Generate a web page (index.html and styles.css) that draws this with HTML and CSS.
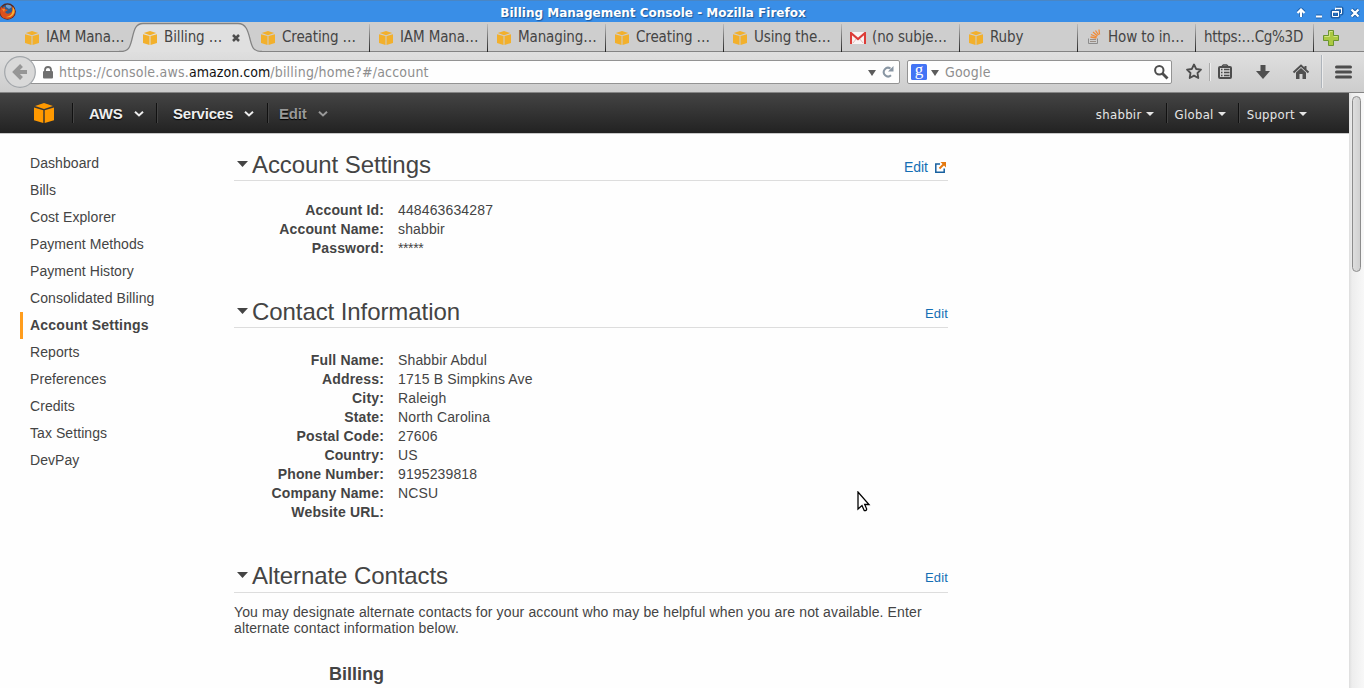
FILE: index.html
```html
<!DOCTYPE html>
<html lang="en">
<head>
<meta charset="utf-8">
<title>Billing Management Console</title>
<link rel="stylesheet" href="styles.css">
</head>
<body>
<svg class="defs" width="0" height="0">
  <symbol id="cube" viewBox="0 0 20 20">
    <path d="M10 0 19 3 10 6 1 3Z M0 4.5 9.3 7.3V20L0 17.2Z M20 4.5 10.7 7.3V20L20 17.2Z"/>
  </symbol>
  <symbol id="chev" viewBox="0 0 10 6"><path d="M1 .8 5 4.500 9 .8" fill="none" stroke="currentColor" stroke-width="2"/></symbol>
  <symbol id="tri" viewBox="0 0 12 6" preserveAspectRatio="none"><path d="M0 0H12L6 6Z" fill="currentColor"/></symbol>
</svg>
<header class="titlebar">
  <svg class="firefox" width="17" height="18" viewBox="0 0 17 18">
    <circle cx="7.5" cy="9.5" r="8.3" fill="#5b2a20"/>
    <circle cx="7.5" cy="8.5" r="6" fill="#2c5d92"/>
    <path d="M6 3Q10 2 12 5L9 7 6 5Z" fill="#6d9ccc"/>
    <path d="M1 4 2 6 5 5 5 7 8 8 5 10Q7 13 10 11 13 10 12 6L11 4Q16 7 15 11 13 17 7 17 0 16 0 9Z" fill="#dc511d"/>
    <path d="M13 5Q16 9 13 13 10 16 6 15 11 14 12 11 13 8 13 5Z" fill="#f6b433"/>
    <path d="M2 7 5 7 4 10Z" fill="#f08c32"/>
  </svg>
  <h1 class="title">Billing Management Console - Mozilla Firefox</h1>
  <svg class="winbtns" width="70" height="22" viewBox="0 0 70 22" fill="none">
    <g stroke="#1e5fa8" stroke-width="4" stroke-linejoin="round"><path d="M7 16V9M4 11.5 7 8.5 10 11.5M22 15.5H28M38.5 10.5H44.5V15.500H38.5ZM42 7.500H47.500V12.500H47M57.500 8.500 64.500 15.500M64.500 8.500 57.500 15.500"/></g>
    <path d="M7 16V9M3.500 12 7 8.500 10.500 12M22 15.500H28M57.500 8.500 64.500 15.500M64.500 8.500 57.500 15.500" stroke="#fff" stroke-width="2.200"/>
    <path d="M38.500 10.500H44.500V15.500H38.500ZM41.500 9V7.500H47.500V12.500H46" stroke="#fff"/><path d="M38 11H45M41 7.500H48" stroke="#fff" stroke-width="1.500"/>
  </svg>
</header>
<nav class="tabs">
  <svg class="active-shape" width="144" height="31" viewBox="0 0 144 31">
    <path d="M0 31V29.500H1C10 29.500 11 25 13 17S16 1.500 24 1.500H119C127 1.500 129 9 131 17S134 29.500 143 29.500V31Z" fill="#e0e0e0"/>
    <path d="M0 29.500H1C10 29.500 11 25 13 17S16 1.500 24 1.500H119C127 1.500 129 9 131 17S134 29.500 143 29.500" fill="none" stroke="#838383" stroke-width="1.300"/>
  </svg>
  <div class="tab plain"><svg class="fav"><use href="#cube"/></svg><span>IAM Mana…</span></div>
  <div class="tab plain active"><svg class="fav"><use href="#cube"/></svg><span>Billing …</span><svg class="close" width="8" height="8" viewBox="0 0 8 8"><path d="M1 1 7 7M7 1 1 7" stroke="#4d4d4d" stroke-width="2.500"/></svg></div>
  <div class="tab"><svg class="fav"><use href="#cube"/></svg><span>Creating …</span></div>
  <div class="tab"><svg class="fav"><use href="#cube"/></svg><span>IAM Mana…</span></div>
  <div class="tab"><svg class="fav"><use href="#cube"/></svg><span>Managing…</span></div>
  <div class="tab"><svg class="fav"><use href="#cube"/></svg><span>Creating …</span></div>
  <div class="tab"><svg class="fav"><use href="#cube"/></svg><span>Using the…</span></div>
  <div class="tab"><svg class="gmail" width="16" height="12" viewBox="0 0 16 12"><path d="M0 0H16V12H0Z" fill="#f8f4f4"/><path d="M3 11 6.500 6.500M13 11 9.500 6.500" stroke="#e5b8b5"/><path d="M1 12V1L8 7 15 1V12" fill="none" stroke="#dc3c37" stroke-width="2.100"/></svg><span>(no subje…</span></div>
  <div class="tab"><svg class="fav"><use href="#cube"/></svg><span>Ruby</span></div>
  <div class="tab"><svg class="stack" width="13" height="16" viewBox="0 0 13 16" fill="none"><path d="M.5 9.500V14.500H9.500V9.500" stroke="#8c8c8c"/><path d="M2 12.500H8M2 10.500H8" stroke="#9b8f86"/><path d="M2.500 8 8.500 9M3 5.500 8.800 8M5 3 9.500 7M7.500 1.500 10.500 6M11 .5 11.500 5.500" stroke="#f08b38" stroke-width="1.300"/></svg><span>How to in…</span></div>
  <div class="tab textonly"><span>https:…Cg%3D</span></div>
  <svg class="plus" width="16" height="16" viewBox="0 0 16 16"><path d="M5.500.5H10.500V5.500H15.500V10.500H10.500V15.500H5.500V10.500H.5V5.500H5.500Z" fill="#abc941" stroke="#6a9430"/><path d="M1.500 6.500H6.500V1.500H9.500M10.500 6.500H14.500" fill="none" stroke="#d2e383"/></svg>
</nav>
<div class="toolbar">
  <div class="urlbox">
    <svg class="lock" width="10" height="13" viewBox="0 0 10 13"><path d="M2 6V4Q2 1 5 1T8 4V6" fill="none" stroke="#6f6f6f" stroke-width="1.800"/><rect y="5" width="10" height="7.500" rx="1" fill="#707070"/></svg>
    <span class="url">https://console.aws.<b>amazon.com</b>/billing/home?#/account</span>
    <svg class="drop" width="8" height="6"><use href="#tri"/></svg>
    <svg class="reload" width="12" height="12" viewBox="0 0 12 12"><path d="M9 9.300A4.300 4.300 0 1 1 8.500 2.500" fill="none" stroke="#8996a3" stroke-width="2"/><path d="M11.500 0V5.500H6Z" fill="#8996a3"/></svg>
  </div>
  <svg class="back" width="34" height="34" viewBox="0 0 34 34"><circle cx="16" cy="17" r="15.300" fill="#d9d9d9" stroke="#a2a6aa" stroke-width="1.200"/><path d="M23 17H12M17.500 10.500 11 17 17.500 23.500" fill="none" stroke="#969696" stroke-width="4"/></svg>
  <div class="search">
    <span class="g">g</span>
    <svg class="gdrop" width="8" height="6"><use href="#tri"/></svg>
    <span class="placeholder">Google</span>
    <svg class="mag" width="15" height="15" viewBox="0 0 15 15"><circle cx="5.300" cy="5.300" r="4.200" fill="none" stroke="#4d4d4d" stroke-width="2"/><path d="M8.500 8.500 13.500 13.500" stroke="#4d4d4d" stroke-width="2.800"/></svg>
  </div>
  <svg class="tools" width="182" height="40" viewBox="0 0 182 40" fill="none">
    <path d="M12 12.500 14.200 17 19 17.700 15.500 21 16.300 26 12 23.600 7.700 26 8.500 21 5 17.700 9.800 17Z" stroke="#4d4d4d" stroke-width="1.800" stroke-linejoin="round"/>
    <path d="M27.500 11V29" stroke="#aaa"/><path d="M28.500 11V29" stroke="#eee"/>
    <rect x="37" y="15" width="12" height="11" rx="1" stroke="#4d4d4d" stroke-width="2"/><path d="M40 14 41.500 13H44.500L46 14" stroke="#4d4d4d" stroke-width="1.500"/><path d="M39 17.500H40.500M42 17.500H47.500M39 20.500H40.500M42 20.500H47.500M39 23.500H40.500M42 23.500H47.500" stroke="#4d4d4d" stroke-width="1.300"/>
    <path d="M78.500 13H83.500V19H88L81 27 74 19H78.500Z" fill="#4f4f4f"/>
    <path d="M111.500 20.500 119 13.500 126.500 20.500M123.500 14V17" stroke="#505050" stroke-width="2"/><path d="M114 20.500 119 16 124 20.500V27H120.500V22H117.500V27H114Z" fill="#505050"/>
    <path d="M139.500 3V36" stroke="#aeb4bb"/><path d="M140.500 3V36" stroke="#ececec"/>
    <path d="M154.500 15H168.500M154.500 20H168.500M154.500 25H168.500" stroke="#4d4d4d" stroke-width="3" stroke-linecap="round"/>
  </svg>
</div>
<div class="viewport">
  <div class="page">
    <div class="awsbar">
      <svg class="logo" width="20" height="20"><use href="#cube"/></svg>
      <div class="menu m-aws">AWS<svg width="10" height="6"><use href="#chev"/></svg></div>
      <div class="menu m-services">Services<svg width="10" height="6"><use href="#chev"/></svg></div>
      <div class="menu m-edit">Edit<svg width="10" height="6"><use href="#chev"/></svg></div>
      <div class="account">
        <div class="amenu">shabbir<svg width="8" height="4"><use href="#tri"/></svg></div>
        <div class="amenu">Global<svg width="8" height="4"><use href="#tri"/></svg></div>
        <div class="amenu">Support<svg width="8" height="4"><use href="#tri"/></svg></div>
      </div>
    </div>
    <div class="columns">
      <ul class="side">
        <li>Dashboard</li><li>Bills</li><li>Cost Explorer</li><li>Payment Methods</li><li>Payment History</li><li>Consolidated Billing</li><li class="current">Account Settings</li><li>Reports</li><li>Preferences</li><li>Credits</li><li>Tax Settings</li><li>DevPay</li>
      </ul>
      <main class="content">
        <section class="sec-account">
          <div class="head"><svg class="tw"><use href="#tri"/></svg><h2>Account Settings</h2><a class="edit big">Edit<svg width="11" height="11" viewBox="0 0 11 11" fill="none"><path d="M5 2H.8V10.200H9.200V6.500" stroke="#17609f" stroke-width="1.500"/><path d="M4.500 6.500 9 2" stroke="#e47911" stroke-width="2"/><path d="M5.500 0H11V5.500Z" fill="#e47911"/></svg></a></div>
          <dl><dt>Account Id:</dt><dd>448463634287</dd><dt>Account Name:</dt><dd>shabbir</dd><dt>Password:</dt><dd class="masked">*****</dd></dl>
        </section>
        <section class="sec-contact">
          <div class="head"><svg class="tw"><use href="#tri"/></svg><h2>Contact Information</h2><a class="edit">Edit</a></div>
          <dl><dt>Full Name:</dt><dd>Shabbir Abdul</dd><dt>Address:</dt><dd>1715 B Simpkins Ave</dd><dt>City:</dt><dd>Raleigh</dd><dt>State:</dt><dd>North Carolina</dd><dt>Postal Code:</dt><dd>27606</dd><dt>Country:</dt><dd>US</dd><dt>Phone Number:</dt><dd>9195239818</dd><dt>Company Name:</dt><dd>NCSU</dd><dt>Website URL:</dt><dd></dd></dl>
        </section>
        <section class="sec-alternate">
          <div class="head"><svg class="tw"><use href="#tri"/></svg><h2>Alternate Contacts</h2><a class="edit">Edit</a></div>
          <p>You may designate alternate contacts for your account who may be helpful when you are not available. Enter alternate contact information below.</p>
          <h3>Billing</h3>
        </section>
      </main>
    </div>
  </div>
  <div class="scroll"><div class="thumb"></div></div>
</div>
<svg class="cursor" width="14" height="22" viewBox="0 0 14 22"><path d="M1 1V18L5 14.500 7.200 19.500Q9.500 20 9.700 18L7.700 13.500H12Z" fill="#fff" stroke="#000" stroke-width="1.300"/></svg>
</body>
</html>
```

FILE: styles.css
```css
* { box-sizing: border-box; }
html, body { margin: 0; height: 100%; overflow: hidden; }
body {
  display: flex;
  flex-direction: column;
  background: #fefefe;
  color: #444;
  font: 14px "Liberation Sans", Arial, sans-serif;
}
svg { display: block; flex: none; }
.defs { position: absolute; }

.titlebar {
  height: 22px;
  flex: none;
  display: flex;
  align-items: center;
  background: #398ee7;
  border-top: 1px solid #4a86c4;
}
.firefox { margin-top: -1px; }
.title {
  margin: 3px 0 0;
  padding-right: 5px;
  flex: 1;
  text-align: center;
  color: #fff;
  font: bold 12px/18px "DejaVu Sans", sans-serif;
  text-shadow: 1px 1px 1px #1d5799;
}

.tabs {
  position: relative;
  height: 30px;
  flex: none;
  display: flex;
  padding-left: 15px;
  background: #cecece;
  border-bottom: 1px solid #838383;
  font: 15px "DejaVu Sans Condensed", "DejaVu Sans", sans-serif;
  font-stretch: condensed;
  letter-spacing: -0.12px;
}
.active-shape { position: absolute; left: 119px; top: 0; }
.tab {
  position: relative;
  width: 118px;
  display: flex;
  align-items: center;
  padding: 1px 0 0 10px;
  white-space: nowrap;
}
.tab:not(.plain)::after {
  content: "";
  position: absolute;
  right: -1px;
  top: 2px;
  width: 1px;
  height: 28px;
  background: linear-gradient(#bbb, #222);
}
.fav { width: 14px; height: 14px; margin: 1px 7px 0 0; fill: #f2b02c; }
.close { margin: 1px 0 0 10px; }
.gmail { margin: 1px 6px 0 -1px; }
.stack { margin: 0 7px 0 1px; }
.textonly { padding-left: 9px; letter-spacing: -0.3px; }
.plus { margin: 8px 0 0 10px; }

.toolbar {
  height: 41px;
  flex: none;
  display: flex;
  align-items: center;
  background: linear-gradient(#dfdfdf, #cdcdcd);
  border-bottom: 1px solid #858585;
  position: relative;
  font: 14px "DejaVu Sans Condensed", "DejaVu Sans", sans-serif;
  font-stretch: condensed;
  letter-spacing: 0.2px;
}
.back { position: absolute; left: 4px; top: 3px; }
.urlbox, .search {
  height: 24px;
  display: flex;
  align-items: center;
  background: #fefefe;
  border: 1px solid #939393;
  border-radius: 2px;
  color: #8e8e8e;
}
.urlbox { width: 880px; margin-left: 20px; padding: 0 5px 0 22px; }
.lock { margin-right: 6px; }
.url { flex: 1; }
.url b { font-weight: normal; color: #111; letter-spacing: 0.05px; }
.drop, .gdrop { color: #5c5c5c; margin-top: 2px; }
.reload { margin-left: 6px; }
.search { width: 265px; margin-left: 7px; padding: 0 2px 0 3px; }
.g {
  width: 16px;
  height: 16px;
  border-radius: 1.5px;
  background: #4374f5;
  color: #fff;
  font: 17px/12px "Liberation Serif", serif;
  letter-spacing: 0;
  text-align: center;
}
.gdrop { margin-left: 4px; }
.placeholder { flex: 1; margin-left: 6px; }
.tools { margin-left: 10px; }

.viewport { flex: 1; min-height: 0; display: flex; }
.page { flex: 1; min-width: 0; }
.scroll { width: 15px; background: linear-gradient(90deg, #ddd, #ededed 3px, #f8f8f8); padding: 3px 3px 0; }
.thumb {
  width: 9px;
  height: 176px;
  border: 1px solid #8c8c8c;
  border-radius: 5px;
  background: linear-gradient(90deg, #dedede, #d0d0d0);
}

.awsbar {
  height: 40px;
  display: flex;
  align-items: center;
  padding-left: 34px;
  background: linear-gradient(#444, #222);
  box-shadow: 0 1px 0 #c8c8c8;
}
.logo { fill: #f90; margin-right: 18px; }
.menu {
  display: flex;
  align-items: center;
  height: 20px;
  padding: 0 0 0 16px;
  border-left: 1px solid #111;
  box-shadow: inset 1px 0 #444;
  color: #eee;
  font-size: 15px;
  font-weight: bold;
  letter-spacing: -0.2px;
  text-shadow: 0 1px 1px #000;
}
.menu svg { margin: 2px 0 0 11px; }
.m-aws { width: 84px; }
.m-services { width: 111px; }
.m-edit { padding-left: 11px; color: #999; }
.account {
  display: flex;
  margin-left: auto;
  padding-right: 32px;
  font: 13px "DejaVu Sans Condensed", "DejaVu Sans", sans-serif;
  font-stretch: condensed;
  letter-spacing: 0.3px;
}
.amenu {
  display: flex;
  align-items: center;
  height: 20px;
  padding: 2px 12px 0 8px;
  color: #e6e6e6;
}
.amenu + .amenu { border-left: 1px solid #111; box-shadow: inset 1px 0 #444; }
.amenu:last-child { padding-right: 10px; }
.amenu svg { margin: -1px 0 0 4px; }

.columns { display: flex; letter-spacing: 0.135px; }
.side { width: 234px; list-style: none; margin: 0; padding: 17px 0 0 20px; line-height: 27px; letter-spacing: 0.07px; }
.side li { padding-left: 10px; }
.side .current { border-left: 3px solid #ff9d1d; padding-left: 7px; font-weight: bold; letter-spacing: 0.23px; }
.content { width: 714px; padding-top: 15px; }
.head { display: flex; height: 33px; border-bottom: 1px solid #ddd; }
.tw { width: 11px; height: 6px; margin: 13px 4px 0 3px; }
h2 { margin: 0; font-size: 24px; line-height: 33px; font-weight: normal; letter-spacing: -0.08px; }
.edit { margin: 11px 0 0 auto; color: #146eb4; font-size: 13px; line-height: 15px; display: flex; }
.big { font-size: 14px; padding-right: 2px; margin-top: 12px; letter-spacing: 0; }
.big svg { margin: 2px 0 0 7px; }
dl { display: grid; grid-template-columns: 150px 1fr; column-gap: 14px; grid-auto-rows: 19px; line-height: 19px; margin: 20px 0 0; }
dt { font-weight: bold; text-align: right; letter-spacing: 0.16px; }
dd { margin: 0; }
.masked { letter-spacing: -0.4px; }
.sec-contact { margin-top: 37px; }
.sec-contact dl { margin-top: 23px; }
.sec-alternate { margin-top: 37px; }
.sec-alternate .head { height: 34px; }
p { margin: 11px 0 0; line-height: 16px; }
h3 { width: 150px; margin: 27px 0 0; text-align: right; font-size: 18px; line-height: 22px; letter-spacing: 0; }
.cursor { position: absolute; left: 857px; top: 491px; }
```
